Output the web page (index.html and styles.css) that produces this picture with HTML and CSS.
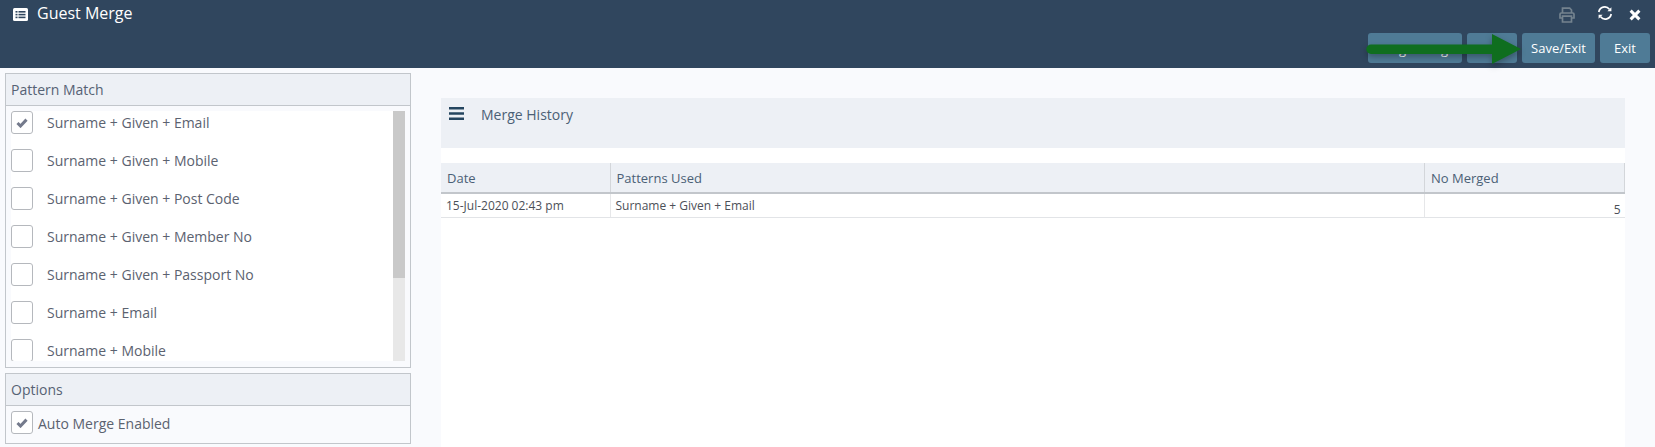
FILE: index.html
```html
<!DOCTYPE html>
<html lang="en">
<head>
<meta charset="utf-8">
<title>Guest Merge</title>
<link rel="stylesheet" href="styles.css">
</head>
<body>
<header class="topbar">
  <div class="title-row">
    <h1 class="title">
      <svg class="title-icon" viewBox="0 0 15 13"><rect width="15" height="13" rx="1.5" fill="#fff"/><g fill="#30465e"><rect x="2.5" y="3" width="2" height="1.6"/><rect x="5.5" y="3" width="7" height="1.6"/><rect x="2.5" y="5.8" width="2" height="1.6"/><rect x="5.5" y="5.8" width="7" height="1.6"/><rect x="2.5" y="8.6" width="2" height="1.6"/><rect x="5.5" y="8.6" width="7" height="1.6"/></g></svg>
      Guest Merge
    </h1>
    <div class="window-tools">
      <svg class="tool-print" viewBox="0 0 16 16"><path d="M3.5 6V1.2h7.2L12.5 3v3M3.5 11H1V7.2C1 6.5 1.5 6 2.2 6h11.6c.7 0 1.2.5 1.2 1.2V11h-2.5M3.5 9.2h9V15h-9z" fill="none" stroke="#74838f" stroke-width="1.7"/></svg>
      <svg class="tool-sync" viewBox="0 0 16 14"><path d="M1.8 6A6 6 0 0 1 12.4 3.2M14.2 8A6 6 0 0 1 3.6 10.8" fill="none" stroke="#fff" stroke-width="1.7"/><path d="M14.4 1.2v4h-4zM1.6 12.8v-4h4z" fill="#fff"/></svg>
      <svg class="tool-close" viewBox="0 0 12 12"><path d="M1.6 1.6l8.8 8.8M10.4 1.6l-8.8 8.8" stroke="#fff" stroke-width="3" fill="none"/></svg>
    </div>
  </div>
  <div class="actions">
    <button class="btn btn-wide">Merge Merge</button>
    <button class="btn btn-small btn-covered">Run</button>
    <button class="btn btn-save">Save/Exit</button>
    <button class="btn btn-small">Exit</button>
    <svg class="arrow" viewBox="0 0 156 32"><path d="M5 11.5H126V1L155 16 126 31V21H5a4.7 4.7 0 0 1 0-9.5z" fill="#0f6e1f"/></svg>
  </div>
</header>
<main class="page">
  <aside class="side">
    <section class="panel">
      <h2 class="panel-head">Pattern Match</h2>
      <div class="list-wrap">
        <div class="pattern-list">
          <label class="pattern"><span class="check is-on"><svg viewBox="0 0 12 10"><path d="M1.5 5l3 3 6-6.4" fill="none" stroke="#747a8c" stroke-width="3"/></svg></span>Surname + Given + Email</label>
          <label class="pattern"><span class="check"></span>Surname + Given + Mobile</label>
          <label class="pattern"><span class="check"></span>Surname + Given + Post Code</label>
          <label class="pattern"><span class="check"></span>Surname + Given + Member No</label>
          <label class="pattern"><span class="check"></span>Surname + Given + Passport No</label>
          <label class="pattern"><span class="check"></span>Surname + Email</label>
          <label class="pattern pattern-cut"><span class="check"></span>Surname + Mobile</label>
        </div>
        <div class="scroll-track"><div class="scroll-thumb"></div></div>
      </div>
    </section>
    <section class="panel">
      <h2 class="panel-head">Options</h2>
      <label class="option"><span class="check is-on"><svg viewBox="0 0 12 10"><path d="M1.5 5l3 3 6-6.4" fill="none" stroke="#747a8c" stroke-width="3"/></svg></span>Auto Merge Enabled</label>
    </section>
  </aside>
  <section class="content">
    <div class="content-head">
      <svg class="burger" viewBox="0 0 15 13"><path d="M0 1.3h15M0 6.5h15M0 11.7h15" stroke="#24455f" stroke-width="2.6"/></svg>
      <span class="content-title">Merge History</span>
    </div>
    <table class="history">
      <thead>
        <tr><th class="col-date">Date</th><th class="col-pattern">Patterns Used</th><th class="col-count">No Merged</th></tr>
      </thead>
      <tbody>
        <tr><td>15-Jul-2020 02:43 pm</td><td>Surname + Given + Email</td><td class="num">5</td></tr>
      </tbody>
    </table>
  </section>
</main>
</body>
</html>
```
FILE: styles.css
```css
* { box-sizing: border-box; }
html, body { margin: 0; height: 100%; }
body {
  height: 447px;
  overflow: hidden;
  background: #f9fafd;
  font-family: "Open Sans", "Liberation Sans", sans-serif;
  color: #5b6270;
}
.topbar {
  height: 68px;
  background: #30465e;
  padding: 0 5px 0 13px;
  display: flex;
  flex-direction: column;
}
.title-row {
  height: 33px;
  display: flex;
  justify-content: space-between;
  align-items: flex-start;
}
.title {
  margin: 0;
  padding-top: 1px;
  display: flex;
  align-items: center;
  gap: 9px;
  font-size: 16px;
  line-height: 24px;
  font-weight: 400;
  color: #fff;
}
.title-icon { width: 15px; height: 13px; margin-top: 2px; }
.window-tools { display: flex; align-items: flex-start; padding-right: 9px; }
.tool-print { width: 16px; height: 16px; margin-top: 7px; }
.tool-sync { width: 16px; height: 14px; margin: 6px 0 0 22px; }
.tool-close { width: 12px; height: 12px; margin: 9px 0 0 16px; }
.actions {
  position: relative;
  display: flex;
  justify-content: flex-end;
  gap: 5px;
}
.btn {
  height: 30px;
  padding: 0;
  border: 0;
  border-radius: 3px;
  background: #4f7b96;
  color: #fff;
  font: 400 13px "Open Sans", "Liberation Sans", sans-serif;
}
.btn-wide { width: 94px; padding-top: 2px; }
.btn-small { width: 50px; }
.btn-covered { font-size: 11px; text-align: left; padding-left: 8px; }
.btn-save { width: 73px; }
.arrow {
  position: absolute;
  right: 128px;
  top: 0;
  width: 156px;
  height: 32px;
  filter: drop-shadow(0 3px 3px rgba(0, 0, 0, .3));
}
.page {
  display: flex;
  align-items: stretch;
  height: 379px;
  padding-left: 5px;
}
.side {
  width: 406px;
  padding-top: 5px;
  display: flex;
  flex-direction: column;
  gap: 5px;
}
.panel { border: 1px solid #c2c6cb; }
.panel-head {
  margin: 0;
  height: 32px;
  padding-left: 5px;
  background: #edf0f5;
  border-bottom: 1px solid #c2c6cb;
  font-size: 14px;
  line-height: 31px;
  font-weight: 400;
  color: #566274;
}
.list-wrap {
  display: flex;
  height: 250px;
  margin: 5px 5px 6px;
  background: #fff;
}
.pattern-list {
  flex: 1;
  overflow: hidden;
  display: flex;
  flex-direction: column;
  gap: 15px;
}
.scroll-track { width: 12px; background: #e8e8e8; }
.scroll-thumb { height: 167px; background: #c9c9c9; }
.pattern {
  flex: none;
  height: 23px;
  display: flex;
  align-items: flex-start;
  gap: 14px;
  font-size: 14px;
  line-height: 23px;
}
.pattern-cut { height: 22px; overflow: hidden; }
.check {
  width: 22px;
  height: 23px;
  flex: none;
  display: flex;
  align-items: center;
  justify-content: center;
  background: #fff;
  border: 1px solid #b5b8bd;
  border-radius: 3px;
}
.check svg { width: 12px; height: 10px; }
.option {
  height: 37px;
  padding: 5px 0 0 5px;
  display: flex;
  align-items: flex-start;
  gap: 5px;
  font-size: 14px;
  line-height: 25px;
}
.content {
  width: 1184px;
  margin-left: 30px;
  margin-top: 30px;
  background: #fff;
}
.content-head {
  height: 50px;
  padding: 9px 0 0 8px;
  background: #edf0f5;
  display: flex;
  align-items: flex-start;
  gap: 17px;
}
.burger { width: 15px; height: 13px; }
.content-title { font-size: 14px; line-height: 16px; color: #4b6075; }
.history {
  width: 100%;
  margin-top: 15px;
  border-collapse: collapse;
  table-layout: fixed;
}
.col-date { width: 169px; }
.col-count { width: 200px; }
.history th {
  height: 30px;
  padding: 0 5px 0 6px;
  background: #edf0f5;
  border-right: 1px solid #d3d6da;
  border-bottom: 2px solid #c2c6cb;
  text-align: left;
  font-size: 13px;
  font-weight: 400;
  color: #4b6075;
}
.history td {
  height: 24px;
  padding: 0 5px;
  border-right: 1px solid #e6e7e9;
  border-bottom: 1px solid #e2e4e7;
  font-size: 12px;
  color: #4c5058;
}
.history td:last-child { border-right: 0; }
.history .num { text-align: right; vertical-align: bottom; padding-right: 4px; font-size: 12px; line-height: 14px; }
```
